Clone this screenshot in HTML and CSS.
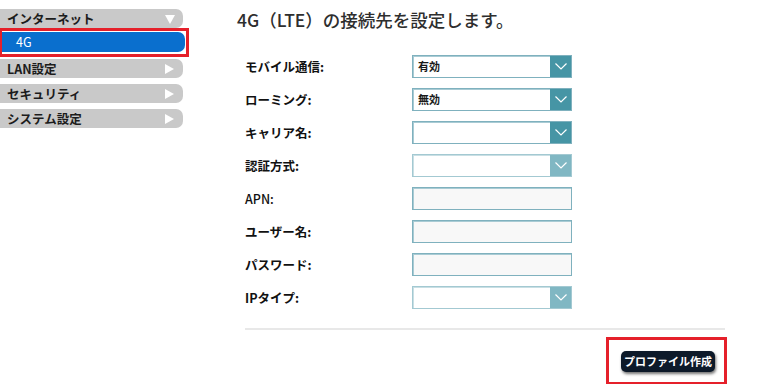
FILE: index.html
```html
<!DOCTYPE html>
<html lang="ja">
<head>
    <meta charset="UTF-8">
    <meta name="viewport" content="width=device-width, initial-scale=1.0">
    <title>4G（LTE）接続先設定</title>
    <link rel="stylesheet" href="styles.css">
</head>
<body>
    <div class="page">
        <ul class="menu">
            <li class="menu-item">インターネット<span class="tri down"></span></li>
            <li class="menu-mark"><div class="menu-sub">4G</div></li>
            <li class="menu-item">LAN設定<span class="tri"></span></li>
            <li class="menu-item">セキュリティ<span class="tri"></span></li>
            <li class="menu-item">システム設定<span class="tri"></span></li>
        </ul>

        <div class="main">
            <h1>4G（LTE）の接続先を設定します。</h1>
            <div class="form">
                <div class="row">
                    <label>モバイル通信:</label>
                    <div class="select"><span class="value">有効</span><span class="arrow"><svg width="12" height="7" viewBox="0 0 12 7"><path d="M0.5 0.5 L6 6 L11.5 0.5" fill="none" stroke="#fff" stroke-width="1.2"/></svg></span></div>
                </div>
                <div class="row">
                    <label>ローミング:</label>
                    <div class="select"><span class="value">無効</span><span class="arrow"><svg width="12" height="7" viewBox="0 0 12 7"><path d="M0.5 0.5 L6 6 L11.5 0.5" fill="none" stroke="#fff" stroke-width="1.2"/></svg></span></div>
                </div>
                <div class="row">
                    <label>キャリア名:</label>
                    <div class="select"><span class="value"></span><span class="arrow"><svg width="12" height="7" viewBox="0 0 12 7"><path d="M0.5 0.5 L6 6 L11.5 0.5" fill="none" stroke="#fff" stroke-width="1.2"/></svg></span></div>
                </div>
                <div class="row">
                    <label>認証方式:</label>
                    <div class="select disabled"><span class="value"></span><span class="arrow"><svg width="12" height="7" viewBox="0 0 12 7"><path d="M0.5 0.5 L6 6 L11.5 0.5" fill="none" stroke="#fff" stroke-width="1.2"/></svg></span></div>
                </div>
                <div class="row">
                    <label class="plain">APN:</label>
                    <div class="text-box"></div>
                </div>
                <div class="row">
                    <label>ユーザー名:</label>
                    <div class="text-box"></div>
                </div>
                <div class="row">
                    <label>パスワード:</label>
                    <div class="text-box"></div>
                </div>
                <div class="row">
                    <label>IPタイプ:</label>
                    <div class="select disabled"><span class="value"></span><span class="arrow"><svg width="12" height="7" viewBox="0 0 12 7"><path d="M0.5 0.5 L6 6 L11.5 0.5" fill="none" stroke="#fff" stroke-width="1.2"/></svg></span></div>
                </div>
            </div>
            <div class="divider"></div>
            <div class="footer">
                <div class="mark">
                    <button>プロファイル作成</button>
                </div>
            </div>
        </div>
    </div>
</body>
</html>
```

FILE: styles.css
```css
body {
    margin: 0;
    background: #fff;
    font-family: "Noto Sans CJK JP", "Noto Sans", sans-serif;
    color: #222;
}
.page {
    display: flex;
    align-items: flex-start;
}

/* menu */
.menu {
    list-style: none;
    margin: 9px 0 0 0;
    padding: 0;
    width: 190px;
    flex-shrink: 0;
}
.menu-item {
    position: relative;
    width: 176px;
    height: 19px;
    line-height: 19px;
    padding-left: 7px;
    margin-bottom: 6px;
    background: #c9c9c9;
    border-radius: 0 7px 7px 0;
    font-size: 12.5px;
    font-weight: bold;
    color: #1c1c1c;
}
.menu-mark {
    margin: -6px 0 2px 0;
    width: 184px;
    height: 21px;
    padding: 1px 0;
    border: 3px solid #e5202a;
    border-left-width: 2px;
}
.menu-sub {
    width: 169px;
    height: 20px;
    padding-left: 14px;
    line-height: 20px;
    background: #0a6fce;
    color: #fff;
    font-size: 12.5px;
    border-radius: 0 7px 7px 0;
}
.tri {
    position: absolute;
    right: 9px;
    top: 5px;
    width: 0;
    height: 0;
    border-top: 5px solid transparent;
    border-bottom: 5px solid transparent;
    border-left: 9px solid #fff;
}
.tri.down {
    top: 6px;
    right: 8px;
    border-left: 5px solid transparent;
    border-right: 5px solid transparent;
    border-top: 9px solid #fff;
    border-bottom: 0;
}

/* main */
.main {
    margin-left: 47px;
    width: 493px;
}
h1 {
    margin: 0;
    padding-top: 8px;
    height: 24px;
    line-height: 24px;
    font-size: 17.5px;
    font-weight: 500;
    color: #2e2e2e;
}
.form {
    margin: 23px 0 0 8px;
}
.row {
    display: flex;
    align-items: center;
    height: 23px;
    margin-bottom: 10px;
}
.row label {
    width: 167px;
    font-size: 12.5px;
    font-weight: bold;
    color: #111;
}
.row label.plain {
    font-weight: 500;
}
.select {
    display: flex;
    width: 158px;
    height: 21px;
    border: 1px solid #7fb1be;
    box-shadow: inset 1px 1px 0 #a9cbd4;
    background: #fff;
}
.select .value {
    flex: 1;
    padding-left: 5px;
    font-size: 11px;
    font-weight: bold;
    line-height: 21px;
    color: #1a1a1a;
}
.arrow {
    width: 21px;
    height: 21px;
    display: flex;
    align-items: center;
    justify-content: center;
    background: #4695a5;
}
.select.disabled {
    border-color: #a3c9d2;
    box-shadow: inset 1px 1px 0 #c9dfe4;
}
.select.disabled .arrow {
    background: #80b7c3;
}
.text-box {
    width: 158px;
    height: 21px;
    border: 1px solid #7fb1be;
    box-shadow: inset 1px 1px 0 #a9cbd4;
    background: #f8f8f8;
}
.divider {
    margin: 19px 0 0 8px;
    width: 480px;
    height: 2px;
    background: #e8e8e8;
}
.footer {
    display: flex;
    justify-content: flex-end;
    padding-right: 3px;
    margin-top: 7px;
}
.mark {
    border: 3px solid #e5202a;
    padding: 7px 9px 10px 12px;
}
button {
    width: 94px;
    height: 21px;
    padding: 0;
    border: none;
    border-radius: 5px;
    background: #0d1a2a;
    color: #fff;
    font-family: "Noto Sans CJK JP", sans-serif;
    font-size: 11px;
    font-weight: bold;
    box-shadow: 1px 2px 3px rgba(0, 0, 0, 0.55);
}
```
